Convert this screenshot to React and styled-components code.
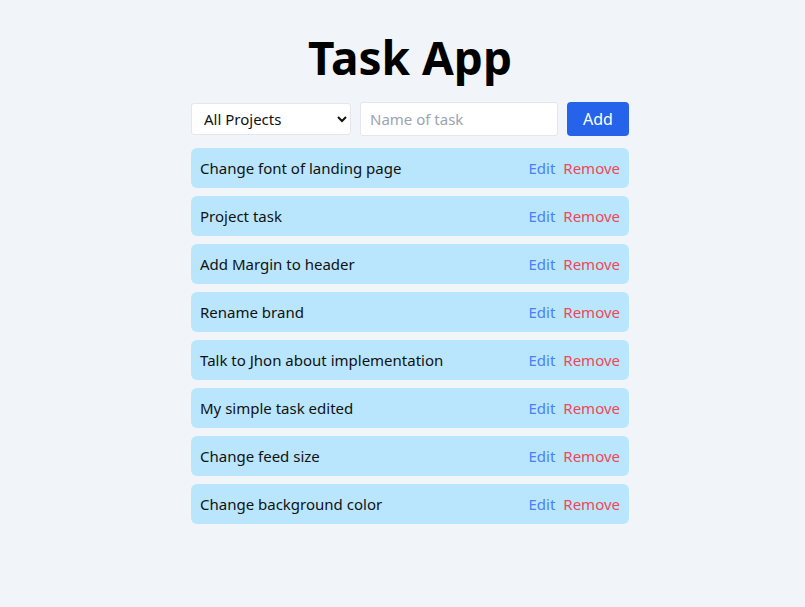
import React from "react";
import styled, { createGlobalStyle } from "styled-components";

const Global = createGlobalStyle`
  html, body { margin: 0; padding: 0; background: #f1f4f9; }
  body { font-family: "Noto Sans", "Open Sans", sans-serif; color: #111; }
  * { box-sizing: border-box; }
`;

const Page = styled.div`
  display: flex;
  justify-content: center;
  padding-top: 29px;
  padding-left: 15px;
`;

const Container = styled.div`
  width: 438px;
  display: flex;
  flex-direction: column;
`;

const Title = styled.h1`
  margin: 0 0 16px;
  font-size: 46px;
  line-height: 57px;
  font-weight: 700;
  text-align: center;
  color: #000;
`;

const Form = styled.form`
  display: flex;
  align-items: center;
  gap: 9px;
  margin-bottom: 12px;
`;

const Select = styled.select`
  width: 160px;
  height: 32px;
  border: 1px solid #e3e6ea;
  border-radius: 3px;
  background: #fff;
  font-family: inherit;
  font-size: 15px;
  padding: 0 8px;
  color: #111;
`;

const Input = styled.input`
  width: 198px;
  height: 34px;
  border: 1px solid #e3e6ea;
  border-radius: 3px;
  background: #fff;
  font-family: inherit;
  font-size: 15px;
  padding: 0 9px;
  outline: none;
  &::placeholder { color: #9ca3af; }
`;

const AddButton = styled.button`
  margin-left: auto;
  width: 62px;
  height: 34px;
  border: none;
  border-radius: 4px;
  background: #2563eb;
  color: #fff;
  font-family: inherit;
  font-size: 16px;
  cursor: pointer;
`;

const List = styled.ul`
  list-style: none;
  margin: 0;
  padding: 0;
  display: flex;
  flex-direction: column;
  gap: 8px;
`;

const Row = styled.li`
  height: 40px;
  display: flex;
  align-items: center;
  justify-content: space-between;
  background: #bae6fd;
  border-radius: 6px;
  padding: 0 9px;
  font-size: 15px;
`;

const Actions = styled.div`
  display: flex;
  gap: 8px;
`;

const Action = styled.button`
  border: none;
  background: none;
  padding: 0;
  font-family: inherit;
  font-size: 15px;
  cursor: pointer;
  color: ${(p) => (p.$danger ? "#ef4758" : "#4a80f5")};
`;

const tasks = [
  "Change font of landing page",
  "Project task",
  "Add Margin to header",
  "Rename brand",
  "Talk to Jhon about implementation",
  "My simple task edited",
  "Change feed size",
  "Change background color",
];

export default function App() {
  return (
    <>
      <Global />
      <Page>
        <Container>
          <Title>Task App</Title>
          <Form onSubmit={(e) => e.preventDefault()}>
            <Select defaultValue="all">
              <option value="all">All Projects</option>
            </Select>
            <Input placeholder="Name of task" />
            <AddButton type="submit">Add</AddButton>
          </Form>
          <List>
            {tasks.map((t) => (
              <Row key={t}>
                <span>{t}</span>
                <Actions>
                  <Action>Edit</Action>
                  <Action $danger>Remove</Action>
                </Actions>
              </Row>
            ))}
          </List>
        </Container>
      </Page>
    </>
  );
}
